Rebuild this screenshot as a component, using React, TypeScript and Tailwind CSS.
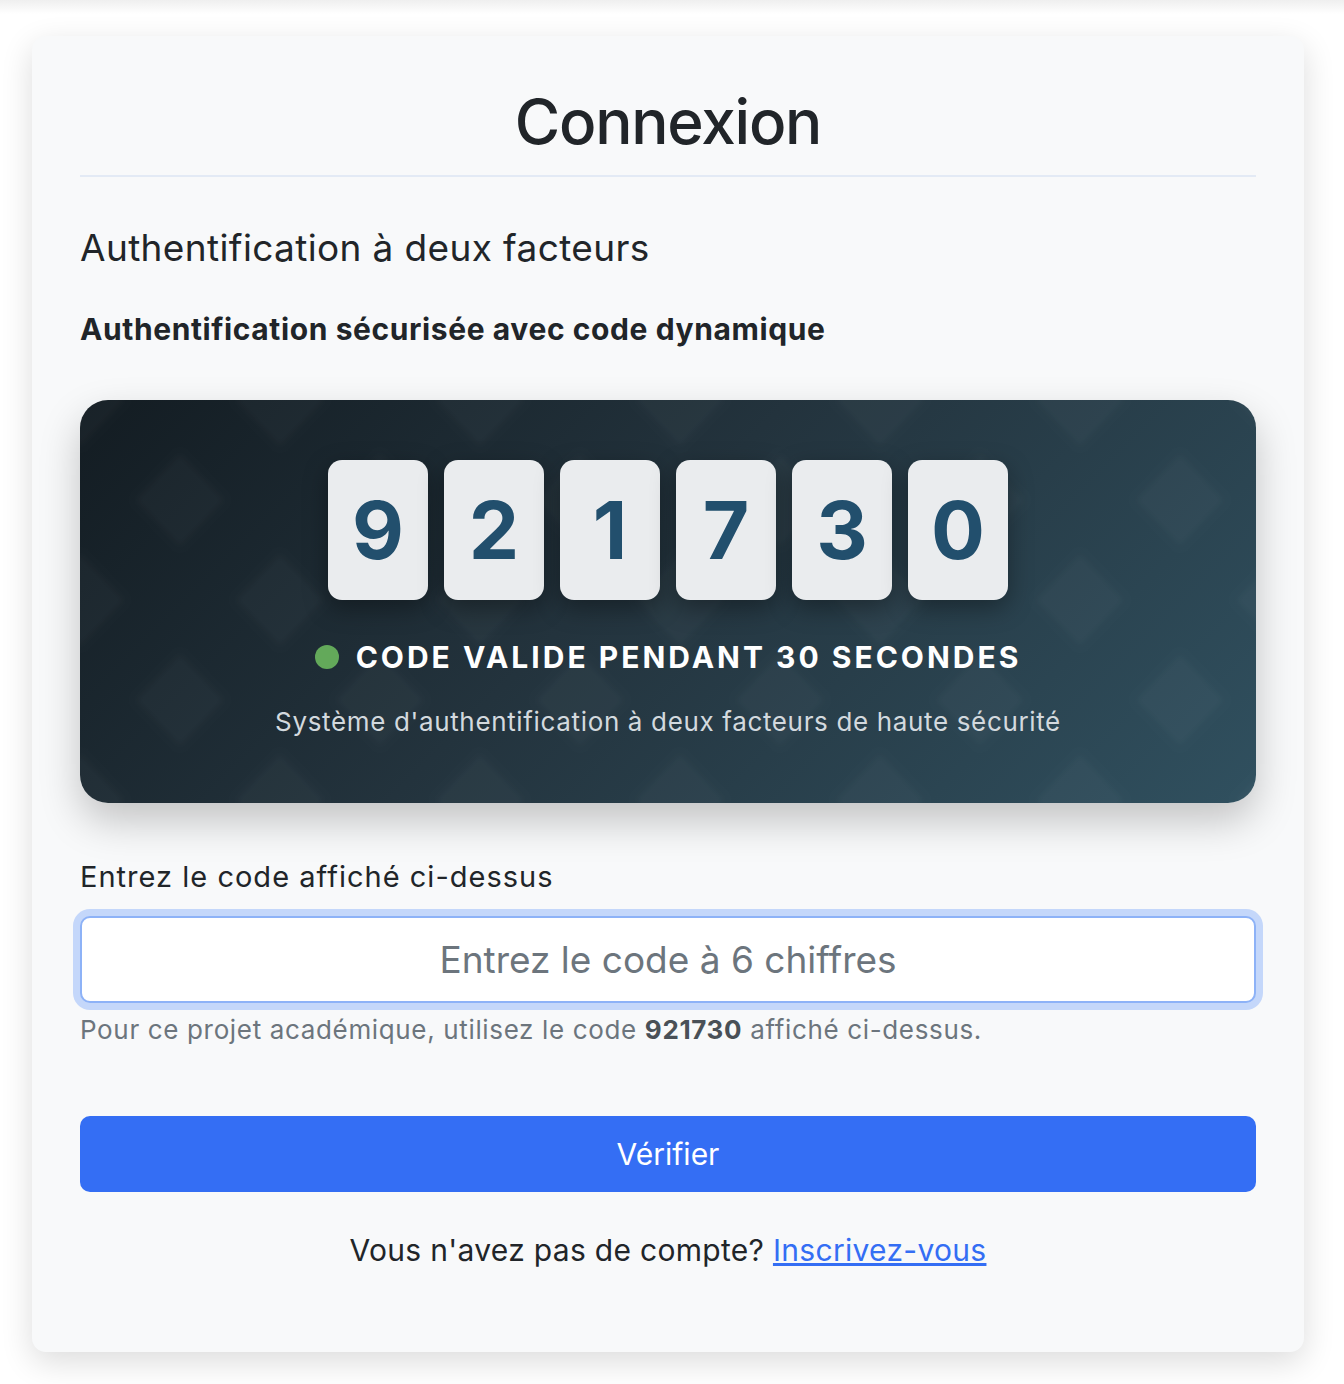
import { useState } from "react";

const digits = ["9", "2", "1", "7", "3", "0"];

function DiamondPattern() {
  return (
    <svg className="pointer-events-none absolute inset-0 h-full w-full" aria-hidden="true">
      <defs>
        <filter id="soft">
          <feGaussianBlur stdDeviation="3" />
        </filter>
        <pattern id="diamonds" width="200" height="200" patternUnits="userSpaceOnUse">
          <g fill="#ffffff" opacity="0.026" filter="url(#soft)">
            <path d="M100 54 L144 100 L100 146 L56 100 Z" />
            <path d="M0 -46 L44 0 L0 46 L-44 0 Z" />
            <path d="M200 -46 L244 0 L200 46 L156 0 Z" />
            <path d="M0 154 L44 200 L0 246 L-44 200 Z" />
            <path d="M200 154 L244 200 L200 246 L156 200 Z" />
          </g>
        </pattern>
      </defs>
      <rect width="100%" height="100%" fill="url(#diamonds)" />
    </svg>
  );
}

export default function App() {
  const [code, setCode] = useState("");

  return (
    <div className="min-h-[1384px] bg-[linear-gradient(to_bottom,#efefef,#ffffff_14px)] pt-[36px] font-['Inter',sans-serif] text-[#212529]">
      <div className="ml-[32px] w-[1272px] rounded-[14px] bg-[#f8f9fa] px-[48px] pb-[82px] pt-[46px] shadow-[0_10px_32px_rgba(0,0,0,0.14)]">
        <div className="border-b-2 border-[#e3eaf5] pb-[13px]">
          <h1 className="text-center text-[62px] font-medium leading-[80px] tracking-[-0.02em]">Connexion</h1>
        </div>

        <h2 className="mt-[49px] text-[37px] font-normal leading-[44px] tracking-[0.01em]">
          Authentification à deux facteurs
        </h2>
        <h3 className="mt-[41px] text-[30px] font-bold leading-[36px] tracking-[0.02em]">
          Authentification sécurisée avec code dynamique
        </h3>

        <div className="relative mt-[53px] overflow-hidden rounded-[28px] bg-[linear-gradient(135deg,#131c22_0%,#23333d_45%,#30505f_100%)] px-8 pb-[63px] pt-[60px] shadow-[0_18px_40px_rgba(0,0,0,0.22)]">
          <DiamondPattern />
          <div className="relative flex justify-center gap-4">
            {digits.map((d, i) => (
              <div
                key={i}
                className="flex h-[140px] w-[100px] items-center justify-center rounded-[14px] bg-[#eaecee] text-[80px] font-bold leading-none text-[#224f6d] shadow-[0_8px_24px_rgba(0,0,0,0.35)]"
              >
                {d}
              </div>
            ))}
          </div>
          <div className="relative mt-[37px] flex items-center justify-center gap-[17px]">
            <span className="h-[24px] w-[24px] rounded-full bg-[#63a95a]" />
            <span className="text-[30px] font-bold uppercase leading-[40px] tracking-[0.1em] text-white">
              Code valide pendant 30 secondes
            </span>
          </div>
          <p className="relative mt-[27px] text-center text-[26px] leading-[36px] tracking-[0.025em] text-[#d3d9de]">
            Système d'authentification à deux facteurs de haute sécurité
          </p>
        </div>

        <label htmlFor="code" className="mt-[56px] block text-[29px] leading-[36px] tracking-[0.035em]">
          Entrez le code affiché ci-dessus
        </label>
        <input
          id="code"
          value={code}
          onChange={(e) => setCode(e.target.value)}
          placeholder="Entrez le code à 6 chiffres"
          className="mt-[21px] block h-[87px] w-full rounded-[10px] border-2 border-[#8db2f7] bg-white text-center text-[37px] text-[#212529] outline-none ring-[7px] ring-[#c4d7fa] placeholder:text-[#6c757d]"
        />
        <p className="mt-[11px] text-[26px] leading-[32px] tracking-[0.025em] text-[#6c757d]">
          Pour ce projet académique, utilisez le code <strong className="font-bold text-[#495057]">921730</strong> affiché
          ci-dessus.
        </p>

        <button
          type="button"
          className="mt-[70px] block h-[76px] w-full rounded-[10px] bg-[#346ef4] text-[30px] text-white"
        >
          Vérifier
        </button>

        <p className="mt-[38px] text-center text-[30px] leading-[40px] tracking-[0.01em]">
          Vous n'avez pas de compte?{" "}
          <a href="#" className="text-[#346ef4] underline">
            Inscrivez-vous
          </a>
        </p>
      </div>
    </div>
  );
}
